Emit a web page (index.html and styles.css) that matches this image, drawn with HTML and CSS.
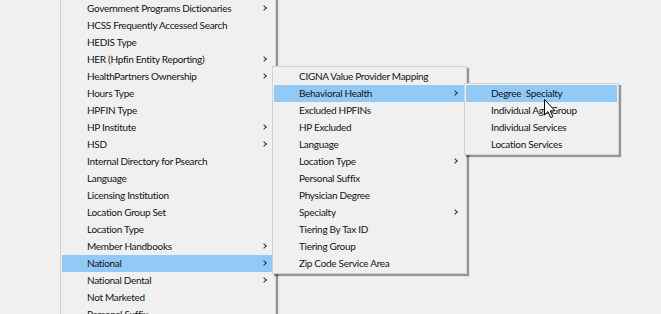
FILE: index.html
```html
<!DOCTYPE html>
<html lang="en">
<head>
  <meta charset="UTF-8">
  <title>Dictionaries Menu</title>
  <link rel="stylesheet" href="styles.css">
</head>
<body>
  <div class="desk">
    <div class="menu menu-main">
      <div class="item sub">Government Programs Dictionaries</div>
      <div class="item">HCSS Frequently Accessed Search</div>
      <div class="item">HEDIS Type</div>
      <div class="item sub">HER (Hpfin Entity Reporting)</div>
      <div class="item sub">HealthPartners Ownership</div>
      <div class="item">Hours Type</div>
      <div class="item">HPFIN Type</div>
      <div class="item sub">HP Institute</div>
      <div class="item sub">HSD</div>
      <div class="item">Internal Directory for Psearch</div>
      <div class="item">Language</div>
      <div class="item">Licensing Institution</div>
      <div class="item">Location Group Set</div>
      <div class="item">Location Type</div>
      <div class="item sub">Member Handbooks</div>
      <div class="item sub active">National</div>
      <div class="item sub">National Dental</div>
      <div class="item">Not Marketed</div>
      <div class="item">Personal Suffix</div>
    </div>

    <div class="menu menu-national">
      <div class="item">CIGNA Value Provider Mapping</div>
      <div class="item sub active">Behavioral Health</div>
      <div class="item">Excluded HPFINs</div>
      <div class="item">HP Excluded</div>
      <div class="item">Language</div>
      <div class="item sub">Location Type</div>
      <div class="item">Personal Suffix</div>
      <div class="item">Physician Degree</div>
      <div class="item sub">Specialty</div>
      <div class="item">Tiering By Tax ID</div>
      <div class="item">Tiering Group</div>
      <div class="item">Zip Code Service Area</div>
    </div>

    <div class="menu menu-behavioral">
      <div class="item active">Degree &nbsp;Specialty</div>
      <div class="item">Individual Age Group</div>
      <div class="item">Individual Services</div>
      <div class="item">Location Services</div>
    </div>

    <svg class="cursor" width="13" height="20" viewBox="0 0 13 20">
      <path d="M0.5 0.5 L0.5 16 L4 12.6 L6.6 18.6 L8.8 17.6 L6.3 11.8 L11 11.8 Z" fill="#fff" stroke="#000" stroke-width="1" stroke-linejoin="miter"/>
    </svg>
  </div>
</body>
</html>
```

FILE: styles.css
```css
body { margin: 0; background: #f0f0f0; font-family: Lato, "Noto Sans", sans-serif; font-size: 10px; letter-spacing: -0.3px; color: #141414; overflow: hidden; }
.desk { width: 661px; height: 314px; }

.menu { position: absolute; background: #f0f0f0; border: 1px solid #d2d2d2; padding: 1px; box-shadow: 2px 2px 1px rgba(0, 0, 0, 0.38); }
.menu-main { left: 60px; top: -2px; width: 212px; }
.menu-national { left: 272px; top: 66px; width: 191px; }
.menu-behavioral { left: 464px; top: 83px; width: 151px; }

.item { position: relative; height: 17px; line-height: 17px; padding-left: 25px; white-space: nowrap; }
.item.active { background: #91c9f7; }
.item.sub::after { content: ""; position: absolute; right: 8px; top: 6px; width: 3px; height: 3px; border-top: 1px solid #333; border-right: 1px solid #333; transform: rotate(45deg); }

.cursor { position: absolute; left: 544px; top: 99px; }
```
